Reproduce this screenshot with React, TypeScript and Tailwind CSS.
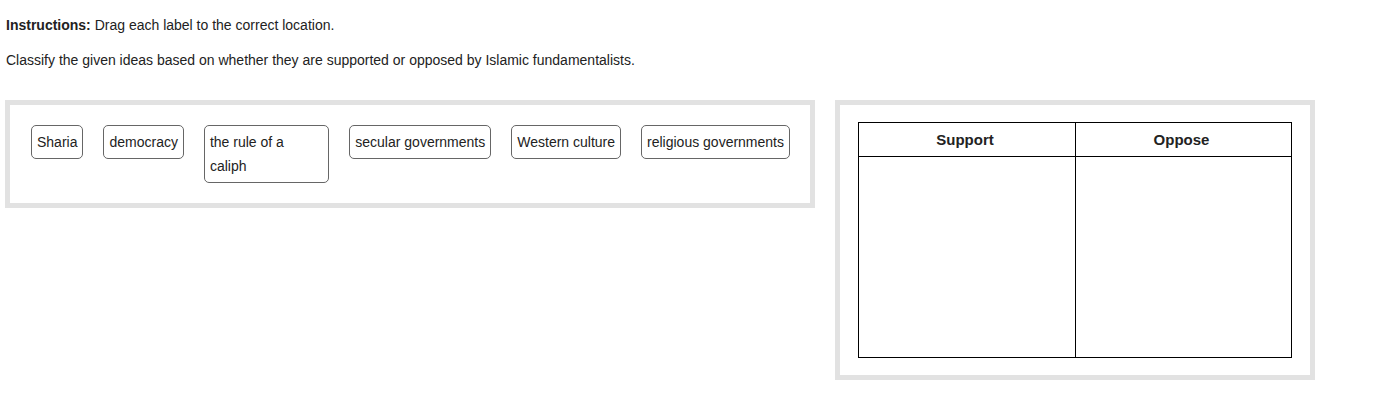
import React from 'react';

const labels = [
  { text: 'Sharia' },
  { text: 'democracy' },
  { text: 'the rule of a caliph', wide: true },
  { text: 'secular governments' },
  { text: 'Western culture' },
  { text: 'religious governments' },
];

export default function App() {
  return (
    <div className="min-h-[419px] bg-white px-[5px] pt-[15px] text-[14px] text-[#222] font-['Liberation_Sans',Arial,sans-serif]">
      <p className="leading-[20px] pl-[1px]">
        <span className="font-bold">Instructions:</span> Drag each label to the correct location.
      </p>
      <p className="mt-[15px] leading-[20px] pl-[1px]">
        Classify the given ideas based on whether they are supported or opposed by Islamic fundamentalists.
      </p>

      <div className="mt-[30px] flex items-start gap-[20px]">
        <div className="w-[810px] border-[5px] border-[#e2e2e2] py-[20px] pl-[21px] pr-[20px] flex items-start gap-[20px]">
          {labels.map((l) => (
            <div
              key={l.text}
              className={`border border-[#666] rounded-[5px] bg-white py-[4px] pl-[5px] leading-[24px] ${
                l.wide ? 'w-[126px] pr-[8px]' : 'pr-[5px] whitespace-nowrap'
              }`}
            >
              {l.text}
            </div>
          ))}
        </div>

        <div className="w-[480px] h-[280px] border-[5px] border-[#e2e2e2] pl-[18px] pt-[17px]">
          <div className="w-[434px] h-[236px] border border-black flex flex-col">
            <div className="h-[34px] flex border-b border-black font-bold text-[15px]">
              <div className="w-[217px] border-r border-black flex items-center justify-center pr-[4px] pt-[1px]">Support</div>
              <div className="flex-1 flex items-center justify-center pr-[4px] pt-[1px]">Oppose</div>
            </div>
            <div className="flex-1 flex">
              <div className="w-[217px] border-r border-black" />
              <div className="flex-1" />
            </div>
          </div>
        </div>
      </div>
    </div>
  );
}
